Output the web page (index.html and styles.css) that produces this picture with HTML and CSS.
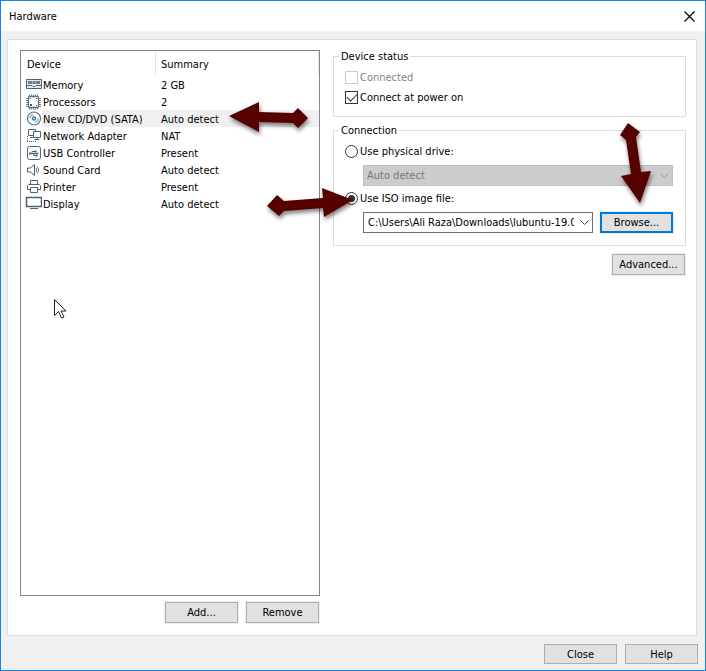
FILE: index.html
```html
<!DOCTYPE html>
<html lang="en">
<head>
<meta charset="utf-8">
<title>Hardware</title>
<link rel="stylesheet" href="styles.css">
</head>
<body>
<div class="window">
  <header class="titlebar">
    <h1>Hardware</h1>
    <button class="close" type="button" aria-label="Close window">
      <svg width="11" height="11" viewBox="0 0 11 11"><path d="M.5.5l10 10M10.500.5l-10 10" stroke="#000" stroke-width="1.200"/></svg>
    </button>
  </header>
  <main class="panel">
    <section class="devices">
      <div class="list">
        <table>
          <colgroup><col class="col-icon"><col class="col-name"><col></colgroup>
          <thead><tr><th colspan="2">Device</th><th>Summary</th></tr></thead>
          <tbody>
            <tr><td class="icon"><svg width="17" height="16" viewBox="0 0 17 16"><path d="M1.500 2.500h15v9h-15z" fill="#e4e9eb" stroke="#4e6270"/><path d="M3 4h4v3H3zM7.500 4h3v3h-3zM11 4h4v3h-4z" fill="#6b7c88"/><path d="M1 8.500h6l1 1h2l1-1h6" fill="none" stroke="#4e6270"/></svg></td><td>Memory</td><td>2 GB</td></tr>
            <tr><td class="icon"><svg width="17" height="16" viewBox="0 0 17 16"><path d="M4.500.500v2M6.500.500v2M8.500.500v2M10.500.500v2M12.500.500v2M4.500 13.500v2M6.500 13.500v2M8.500 13.500v2M10.500 13.500v2M12.500 13.500v2M1 4.500h2M1 6.500h2M1 8.500h2M1 10.500h2M1 12.500h2M14 4.500h2M14 6.500h2M14 8.500h2M14 10.500h2M14 12.500h2" stroke="#71808a"/><rect x="3.500" y="2.500" width="10" height="11" rx="1" fill="#fff" stroke="#5f717e" stroke-width="1.300"/><path d="M5 4h1v1H5zM5 10h2v2H5zM11 11h1v1h-1zM11 4h1v1h-1z" fill="#4e6270"/></svg></td><td>Processors</td><td>2</td></tr>
            <tr class="selected"><td class="icon"><svg width="17" height="16" viewBox="0 0 17 16" fill="none"><circle cx="9" cy="7.500" r="6.500" stroke="#5b7383" stroke-width="1.200"/><circle cx="9" cy="7.500" r="1.500" stroke="#4382ad" stroke-width="1.500"/><path d="M5 7.500a4 4 0 0 1 3-4M13 7.500a4 4 0 0 1-3 4" stroke="#8fb6d0" stroke-width="1.500"/></svg></td><td>New CD/DVD (SATA)</td><td>Auto detect</td></tr>
            <tr><td class="icon"><svg width="17" height="16" viewBox="0 0 17 16" fill="none" stroke="#4e6270"><path d="M3.500 1.500h7v6h-7zM5 9.500h3"/><path d="M8.500 3.500h7v6h-7z" fill="#fff"/><path d="M12 10v1M9.500 11.500h5"/><path d="M2.500 8v6M2 13.500h9" stroke-dasharray="1 1"/></svg></td><td>Network Adapter</td><td>NAT</td></tr>
            <tr><td class="icon"><svg width="17" height="16" viewBox="0 0 17 16" fill="none" stroke="#4e6270"><rect x="2.500" y="1.500" width="13" height="13" rx="2"/><path d="M5 8.500h8M7 8.500v-2h3M8.500 8.500v2H11"/><path d="M4 7.500h2v2H4zM9.500 5.500h2v2h-2zM10.500 9.500h2v2h-2zM12 7.500l2 1-2 1z" fill="#4e6270" stroke="none"/></svg></td><td>USB Controller</td><td>Present</td></tr>
            <tr><td class="icon"><svg width="17" height="16" viewBox="0 0 17 16" fill="none" stroke="#4e6270"><path d="M2.500 6h3l4-3.500v11L5.500 10h-3z"/><path d="M11 6q1.500 2 0 4M12.500 4.500q2.500 3.500 0 7" stroke="#667985"/></svg></td><td>Sound Card</td><td>Auto detect</td></tr>
            <tr><td class="icon"><svg width="17" height="16" viewBox="0 0 17 16" fill="none" stroke="#4e6270"><path d="M5.500 5V1.500h7V5M5 10.500H2.500v-4l1-1h11l1 1v4H13"/><path d="M5.500 8.500h7v5h-7z"/></svg></td><td>Printer</td><td>Present</td></tr>
            <tr><td class="icon"><svg width="17" height="16" viewBox="0 0 17 16"><path d="M1.500 1.500h15v9h-15z" fill="#fff" stroke="#4e6270" stroke-width="1.500"/><path d="M5 12.500h8" stroke="#4e6270"/></svg></td><td>Display</td><td>Auto detect</td></tr>
          </tbody>
        </table>
      </div>
      <div class="actions">
        <button class="btn" type="button">Add...</button>
        <button class="btn" type="button">Remove</button>
      </div>
    </section>
    <form class="settings">
      <fieldset class="status">
        <legend>Device status</legend>
        <label class="choice disabled"><input type="checkbox" disabled>Connected</label>
        <label class="choice"><input type="checkbox" checked>Connect at power on</label>
      </fieldset>
      <fieldset class="connection">
        <legend>Connection</legend>
        <label class="choice"><input type="radio" name="source">Use physical drive:</label>
        <div class="field">
          <div class="combo">
            <select aria-label="Physical drive" disabled><option>Auto detect</option></select>
            <svg class="chevron" width="9" height="6" viewBox="0 0 9 6"><path d="M.5.500l4 4 4-4" fill="none" stroke="#999"/></svg>
          </div>
        </div>
        <label class="choice"><input type="radio" name="source" checked>Use ISO image file:</label>
        <div class="field">
          <div class="combo">
            <select aria-label="ISO image file"><option>C:\Users\Ali Raza\Downloads\lubuntu-19.04-desktop-amd64.iso</option></select>
            <svg class="chevron" width="9" height="6" viewBox="0 0 9 6"><path d="M.5.500l4 4 4-4" fill="none" stroke="#444"/></svg>
          </div>
          <button class="btn focused" type="button">Browse...</button>
        </div>
      </fieldset>
      <button class="btn advanced" type="button">Advanced...</button>
    </form>
  </main>
  <footer class="footer">
    <button class="btn" type="button">Close</button>
    <button class="btn" type="button">Help</button>
  </footer>
</div>
<svg class="annotations" width="706" height="671" viewBox="0 0 706 671" aria-hidden="true">
  <g class="arrows">
    <path d="M229 116l30-14v10l34 1 5-5 10 10-10 10-5-5-34-1v10z"/>
    <path d="M353 200l-31-12 1 10-39 3-7-6-10 11 12 10 5-5 39-3 1 9z"/>
    <path d="M640 203l-19-27 10-2-5-34-6-5 8-12 12 9-4 5 5 35 10-1z"/>
  </g>
  <path d="M54.500 299.500v16l4-4 3 6.500 2.500-1-3-6h5z" fill="#fff" stroke="#222"/>
</svg>
</body>
</html>
```

FILE: styles.css
```css
* { box-sizing: border-box; }

body {
  margin: 0;
  font: 11px/13px "DejaVu Sans Condensed", "DejaVu Sans", sans-serif;
  color: #000;
}

button, select, input { font: inherit; color: inherit; margin: 0; }

.window {
  display: flex;
  flex-direction: column;
  min-height: 100vh;
  border: 1px solid #1883d7;
  background: #f0f0f0;
}

.titlebar {
  display: flex;
  align-items: center;
  justify-content: space-between;
  height: 30px;
  padding: 0 10px 0 8px;
  background: #fff;
}

.titlebar h1 { margin: 0; font: inherit; }

.close {
  display: flex;
  padding: 0;
  border: 0;
  background: none;
}

.panel {
  flex: 1;
  display: flex;
  gap: 13px;
  margin: 8px 8px 0 6px;
  padding: 10px 10px 12px 12px;
  border: 1px solid #dcdcdc;
  background: #fff;
}

.devices {
  flex: 0 0 300px;
  display: flex;
  flex-direction: column;
}

.list {
  flex: 1;
  border: 1px solid #828790;
}

table {
  width: 100%;
  table-layout: fixed;
  border-collapse: separate;
  border-spacing: 0;
}

.col-icon { width: 21px; }
.col-name { width: 114px; }

th {
  height: 25px;
  padding: 2px 6px 0;
  border-right: 1px solid #e5e5e5;
  text-align: left;
  font-weight: normal;
}

th:last-child { padding-left: 5px; }

td {
  height: 17px;
  padding: 1px 0 0 5px;
  white-space: nowrap;
}

td.icon { padding: 0 0 0 4px; }
td.icon + td { padding-left: 1px; }
td svg { display: block; }
.selected td:not(.icon) { background: #f0f0f0; }

.actions, .footer {
  display: flex;
  justify-content: flex-end;
  gap: 8px;
}

.actions { padding: 6px 1px 0 0; }
.footer { padding: 8px 7px 6px; }

.btn {
  width: 73px;
  height: 21px;
  padding: 0;
  border: 1px solid #adadad;
  background: #e1e1e1;
  text-align: center;
}

.panel .btn { box-shadow: 0 0 0 1px #f0f0f0; }
.btn.focused { border: 2px solid #0078d7; }
.footer .btn { height: 20px; }

.settings {
  flex: 1;
  min-width: 0;
  display: flex;
  flex-direction: column;
}

fieldset {
  min-width: 0;
  margin: 0 0 7px;
  padding: 8px 12px 12px 11px;
  border: 1px solid #dcdcdc;
}

legend { margin-left: -6px; padding: 0 2px; }

.choice {
  display: flex;
  align-items: center;
  gap: 2px;
  height: 13px;
}

.status .choice + .choice { margin-top: 7px; }
.connection .field + .choice { margin-top: 6px; }
.disabled { color: #838383; }

.choice input {
  appearance: none;
  display: grid;
  place-content: center;
  width: 13px;
  height: 13px;
  border: 1px solid #333;
  background: #fff;
}

.choice input:disabled { border-color: #ccc; }
.choice input[type="radio"] { border-radius: 50%; }

.choice input[type="checkbox"]:checked::before {
  content: "";
  width: 9px;
  height: 5px;
  margin-bottom: 3px;
  border: solid #333;
  border-width: 0 0 1px 1px;
  transform: rotate(-45deg);
}

.choice input[type="radio"]:checked::before {
  content: "";
  width: 7px;
  height: 7px;
  border-radius: 50%;
  background: #333;
}

.field {
  display: flex;
  align-items: center;
  gap: 7px;
  margin: 7px 0 0 18px;
}

.combo {
  position: relative;
  flex: 1;
  min-width: 0;
}

.combo select {
  display: block;
  appearance: none;
  width: 100%;
  height: 21px;
  padding: 0 18px 0 4px;
  border: 1px solid #707070;
  border-radius: 0;
  background: #fff;
}

.combo select:disabled {
  padding-left: 3px;
  border-color: #bfbfbf;
  background: #ccc;
  color: #787878;
  opacity: 1;
}

.chevron {
  position: absolute;
  right: 4px;
  top: 8px;
  pointer-events: none;
}

.advanced { align-self: flex-end; margin-top: 1px; margin-right: 1px; }

.annotations {
  position: absolute;
  top: 0;
  left: 0;
  pointer-events: none;
}

.arrows {
  fill: #560000;
  filter: drop-shadow(1px 3px 2px rgba(0, 0, 0, 0.5));
}
```
